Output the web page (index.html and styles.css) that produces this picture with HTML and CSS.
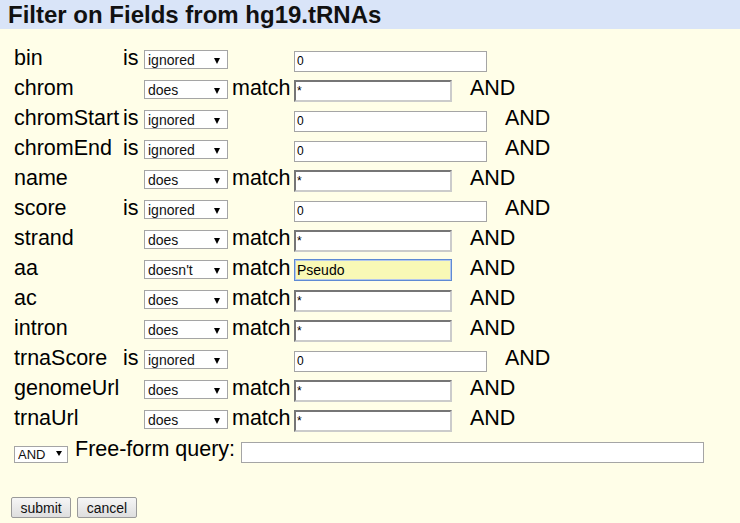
FILE: index.html
```html
<!DOCTYPE html>
<html>
<head>
<meta charset="utf-8">
<title>Filter on Fields from hg19.tRNAs</title>
<link rel="stylesheet" href="styles.css">
</head>
<body>
<div class="header">Filter on Fields from hg19.tRNAs</div>
<form class="content">
  <div class="filters">
    <span class="lbl">bin</span><span class="op">is</span><span class="sel"><select class="dd"><option>ignored</option></select></span><span class="op"></span><span class="val"><input class="num" value="0"></span>

    <span class="lbl">chrom</span><span class="op"></span><span class="sel"><select class="dd"><option>does</option></select></span><span class="op">match</span><span class="val"><input class="pat" value="*"><span class="and">AND</span></span>

    <span class="lbl">chromStart</span><span class="op">is</span><span class="sel"><select class="dd"><option>ignored</option></select></span><span class="op"></span><span class="val"><input class="num" value="0"><span class="and">AND</span></span>

    <span class="lbl">chromEnd</span><span class="op">is</span><span class="sel"><select class="dd"><option>ignored</option></select></span><span class="op"></span><span class="val"><input class="num" value="0"><span class="and">AND</span></span>

    <span class="lbl">name</span><span class="op"></span><span class="sel"><select class="dd"><option>does</option></select></span><span class="op">match</span><span class="val"><input class="pat" value="*"><span class="and">AND</span></span>

    <span class="lbl">score</span><span class="op">is</span><span class="sel"><select class="dd"><option>ignored</option></select></span><span class="op"></span><span class="val"><input class="num" value="0"><span class="and">AND</span></span>

    <span class="lbl">strand</span><span class="op"></span><span class="sel"><select class="dd"><option>does</option></select></span><span class="op">match</span><span class="val"><input class="pat" value="*"><span class="and">AND</span></span>

    <span class="lbl">aa</span><span class="op"></span><span class="sel"><select class="dd"><option>doesn't</option></select></span><span class="op">match</span><span class="val"><input class="pat hl" value="Pseudo"><span class="and">AND</span></span>

    <span class="lbl">ac</span><span class="op"></span><span class="sel"><select class="dd"><option>does</option></select></span><span class="op">match</span><span class="val"><input class="pat" value="*"><span class="and">AND</span></span>

    <span class="lbl">intron</span><span class="op"></span><span class="sel"><select class="dd"><option>does</option></select></span><span class="op">match</span><span class="val"><input class="pat" value="*"><span class="and">AND</span></span>

    <span class="lbl">trnaScore</span><span class="op">is</span><span class="sel"><select class="dd"><option>ignored</option></select></span><span class="op"></span><span class="val"><input class="num" value="0"><span class="and">AND</span></span>

    <span class="lbl">genomeUrl</span><span class="op"></span><span class="sel"><select class="dd"><option>does</option></select></span><span class="op">match</span><span class="val"><input class="pat" value="*"><span class="and">AND</span></span>

    <span class="lbl">trnaUrl</span><span class="op"></span><span class="sel"><select class="dd"><option>does</option></select></span><span class="op">match</span><span class="val"><input class="pat" value="*"><span class="and">AND</span></span>
  </div>
  <div class="freeform">
    <span class="sel small"><select class="dd dd-small"><option>AND</option></select></span>
    <span class="fflabel">Free-form query:</span>
    <input class="ffinput" value="">
  </div>
  <div class="buttons">
    <button type="button" class="btn">submit</button>
    <button type="button" class="btn">cancel</button>
  </div>
</form>
</body>
</html>
```

FILE: styles.css
```css
html, body {
  margin: 0;
  padding: 0;
  background: #fffee8;
  font-family: "Liberation Sans", Arial, sans-serif;
  color: #000;
}

.header {
  background: #d9e4f8;
  height: 29px;
  line-height: 29px;
  padding-left: 8px;
  font-size: 24px;
  font-weight: bold;
  color: #111;
  white-space: nowrap;
}

.content {
  padding: 18px 0 0 14px;
}

.filters {
  display: grid;
  grid-template-columns: 109px 21px 88px 62px auto;
  grid-auto-rows: 30px;
  align-items: baseline;
  justify-items: start;
}

.lbl, .op, .fflabel, .and {
  font-size: 21.5px;
  line-height: 23px;
  white-space: nowrap;
}

.sel {
  position: relative;
  display: inline-block;
}

.sel::after {
  content: "";
  position: absolute;
  right: 8px;
  top: 8px;
  border-left: 3.5px solid transparent;
  border-right: 3.5px solid transparent;
  border-top: 6px solid #000;
  pointer-events: none;
}

.dd {
  -webkit-appearance: none;
  appearance: none;
  width: 84px;
  height: 19px;
  border: 1px solid #a5a5a5;
  border-radius: 0;
  background: #fff;
  font-family: "Liberation Sans", Arial, sans-serif;
  font-size: 14px;
  color: #111;
  padding: 1px 0 0 3px;
  margin: 0;
}

.val {
  display: flex;
  align-items: baseline;
}

.num, .pat, .ffinput {
  font-family: "Liberation Sans", Arial, sans-serif;
  font-size: 12px;
  color: #000;
  margin: 0;
  padding: 0 2px;
  background: #fff;
  box-sizing: border-box;
  outline: none;
}

.num {
  width: 193px;
  height: 21px;
  border: 1px solid #a5a5a5;
}

.pat {
  width: 158px;
  height: 22px;
  border: 2px solid;
  border-color: #767676 #cbcbcb #cbcbcb #767676;
  padding: 0 1px;
}

.pat.hl {
  background: #f9f9b6;
  border: 1px solid #5e8ad4;
  box-shadow: inset 0 0 0 1px #b4c8ec;
  font-size: 14px;
  padding: 0 2px;
}

.and {
  margin-left: 18px;
}

.freeform {
  display: flex;
  align-items: baseline;
  margin-top: 1px;
}

.sel.small {
  align-self: flex-start;
  margin-top: 7px;
}

.sel.small::after {
  right: 6px;
  top: 6px;
  border-left-width: 3px;
  border-right-width: 3px;
  border-top-width: 5px;
}

.dd-small {
  width: 54px;
  height: 17px;
  font-size: 13px;
  padding: 0 0 0 3px;
}

.fflabel {
  margin-left: 7px;
}

.ffinput {
  width: 463px;
  height: 21px;
  border: 1px solid #a5a5a5;
  margin-left: 6px;
}

.buttons {
  display: flex;
  gap: 6px;
  margin: 34px 0 0 -3px;
}

.btn {
  font-family: "Liberation Sans", Arial, sans-serif;
  font-size: 14px;
  height: 21px;
  padding: 0 8.5px;
  border: 1px solid #9a9a9a;
  border-radius: 2px;
  background: linear-gradient(#f6f6f6, #dedede);
  color: #111;
  margin: 0;
}
```
